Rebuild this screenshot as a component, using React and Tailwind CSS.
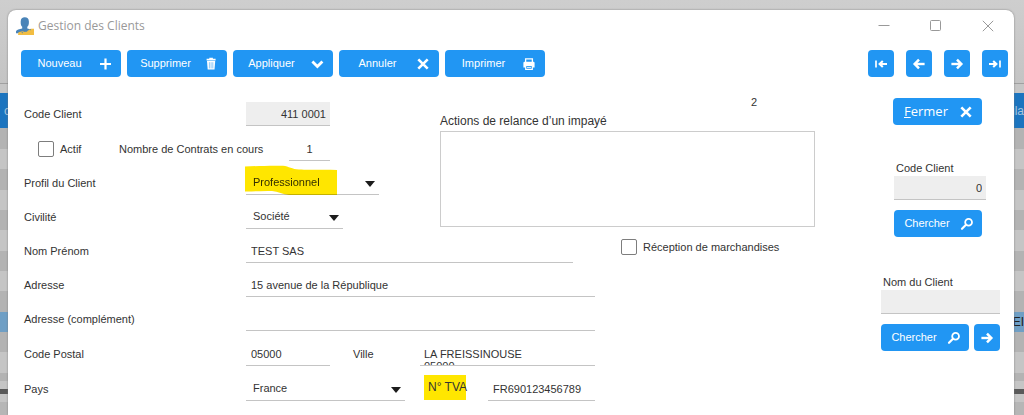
import React, { useId } from "react";

/* ---------- Icons ---------- */

function Icon({ children, className = "size-3.5" }) {
  return (
    <svg viewBox="0 0 14 14" className={className + " shrink-0"} fill="none" stroke="currentColor" strokeWidth="2.4" aria-hidden="true">
      {children}
    </svg>
  );
}

const PlusIcon = () => (
  <Icon>
    <path d="M7.500 1.500v11M2 7h11" strokeWidth="2.200" />
  </Icon>
);
const TrashIcon = () => (
  <Icon>
    <path d="M2.600 2.600h9M5.300 1.500h3.600" strokeWidth="1.600" />
    <path d="M3 4h8.200l-.7 8.600H3.700z" fill="currentColor" stroke="none" />
    <path d="M5.400 5.200v6.200M7.100 5.200v6.200M8.800 5.200v6.200" stroke="#2196f3" strokeWidth=".5" />
  </Icon>
);
const ChevronIcon = () => (
  <Icon>
    <path d="M2.400 4.400l5 5 5-5" strokeWidth="2.800" />
  </Icon>
);
const CrossIcon = () => (
  <Icon>
    <path d="M2.300 2.300l9.400 9.400M11.700 2.300l-9.400 9.400" strokeWidth="2.600" />
  </Icon>
);
const PrinterIcon = () => (
  <Icon>
    <path d="M3.600 5V1.800h6.800V5" strokeWidth="1.300" />
    <path d="M2.600 4.800h8.800a1.200 1.200 0 011.200 1.200v4.400H1.400V6a1.200 1.200 0 011.200-1.200z" fill="currentColor" stroke="none" />
    <path d="M3.700 8.400h6.600v4H3.700z" fill="#2196f3" strokeWidth="1.200" />
    <path d="M5 10.400h4" strokeWidth=".9" />
  </Icon>
);
const SearchIcon = () => (
  <Icon>
    <circle cx="8.600" cy="5.200" r="3.400" strokeWidth="1.800" />
    <path d="M6 7.800l-4 4" strokeWidth="2.200" strokeLinecap="round" />
  </Icon>
);
const RightIcon = () => (
  <Icon>
    <path d="M1.400 7h9.400" strokeWidth="2.400" />
    <path d="M7 2.700L11.300 7 7 11.300" strokeWidth="2.500" />
  </Icon>
);
const LeftIcon = () => (
  <Icon>
    <path d="M12.600 7H3.200" strokeWidth="2.400" />
    <path d="M7 2.700L2.700 7 7 11.300" strokeWidth="2.500" />
  </Icon>
);
const FirstIcon = () => (
  <Icon>
    <path d="M2 3.400v7.200" strokeWidth="1.700" />
    <path d="M13 7H6" strokeWidth="2" />
    <path d="M8.800 3.900L5.600 7l3.200 3.100" strokeWidth="2.100" />
  </Icon>
);
const LastIcon = () => (
  <Icon>
    <path d="M12 3.400v7.200" strokeWidth="1.700" />
    <path d="M1 7h7" strokeWidth="2" />
    <path d="M5.200 3.900L8.400 7l-3.200 3.100" strokeWidth="2.100" />
  </Icon>
);

function AppIcon() {
  return (
    <svg viewBox="0 0 18 18" className="size-[18px]" aria-hidden="true">
      <path d="M6.200 9.800C5 8.800 4.600 6.800 4.700 4.400 4.800 1.800 6.300.3 8.800.3s4 1.500 4.100 4.100c.1 2.400-.3 4.400-1.600 5.400v1.600l4.700 1.400v3.400H0v-2c.6-1.500 3.400-2.200 6.200-2.800z" fill="#4a84b8" />
      <path d="M2.500 15.300l4-1 2.500.6 3.200-1.400 2.400-1.700H18v6.200H2z" fill="#f2bd42" />
      <path d="M5.500 14.700l1.600.8-1 .9zM9.500 14.500l1.500-1 .3 1.300zM13.500 12.500l1.300-.6v1.500z" fill="#4a84b8" />
    </svg>
  );
}

/* ---------- Controls ---------- */

const blue =
  "flex h-[27px] shrink-0 items-center rounded bg-[#2196f3] text-white hover:bg-[#1e88e5]";

function ActionButton({ children, icon }) {
  return (
    <button type="button" className={blue + " w-[100px]"}>
      <span className="w-[77px] text-center">{children}</span>
      {icon}
    </button>
  );
}

function SideButton({ children, icon, className = "" }) {
  return (
    <button type="button" className={blue + " w-[88px] " + className}>
      <span className="w-[66px] text-center">{children}</span>
      {icon}
    </button>
  );
}

function IconButton({ label, icon }) {
  return (
    <button type="button" aria-label={label} className={blue + " w-[26px] justify-center"}>
      {icon}
    </button>
  );
}

const fieldLine = "h-6 min-w-0 rounded-none border-b border-[#c4c4c4] outline-none";

function Row({ tall, children }) {
  return <div className={"flex items-end " + (tall ? "h-[35px]" : "h-[34px]")}>{children}</div>;
}

function Label({ id, children }) {
  return (
    <label htmlFor={id} className="w-[223px] shrink-0 pl-px leading-6 whitespace-nowrap">
      {children}
    </label>
  );
}

function Select({ id, options, className, children }) {
  return (
    <div className={"relative isolate " + className}>
      <select id={id} className={fieldLine + " block w-full appearance-none bg-white px-[7px]"}>
        {options.map((o) => (
          <option key={o}>{o}</option>
        ))}
      </select>
      <svg viewBox="0 0 10 6" className="pointer-events-none absolute top-2.5 right-1 h-1.5 w-2.5" aria-hidden="true">
        <path d="M0 0h10L5 6z" fill="#1c1c1c" />
      </svg>
      {children}
    </div>
  );
}

function CheckBox({ children, className = "" }) {
  const id = useId();
  return (
    <div className={"flex items-center gap-1.5 " + className}>
      <input
        id={id}
        type="checkbox"
        className="size-4 shrink-0 appearance-none rounded-xs border border-[#7d7d7d] bg-white checked:bg-[#2196f3]"
      />
      <label htmlFor={id} className="whitespace-nowrap">
        {children}
      </label>
    </div>
  );
}

/* ---------- Dimmed window underneath ---------- */

function Backdrop() {
  return (
    <div aria-hidden="true" className="flex flex-col bg-[#cdcdcd] [grid-area:1/1]">
      <div className="h-[84px] shrink-0 border-b border-[#a0a0a0] bg-linear-to-b from-[#cecece] to-[#c4c4c4]" />
      <div className="h-[9px] shrink-0 bg-[#c6c6c6]" />
      <div className="flex h-[35px] shrink-0 items-center justify-between bg-[#1b74bf] pl-1 text-xs text-[#a9c4dc]">
        <span>c</span>
        <span>ula</span>
      </div>
      <div className="h-[21px] shrink-0 bg-[#b3b3b3]" />
      <div className="h-5 shrink-0 bg-[#c5c5c5]" />
      <div className="h-[21px] shrink-0 bg-[#b3b3b3]" />
      <div className="h-5 shrink-0 bg-[#c5c5c5]" />
      <div className="h-5 shrink-0 bg-[#b3b3b3]" />
      <div className="h-[21px] shrink-0 bg-[#c5c5c5]" />
      <div className="h-5 shrink-0 bg-[#b3b3b3]" />
      <div className="h-5 shrink-0 bg-[#c5c5c5]" />
      <div className="h-[21px] shrink-0 bg-[#b3b3b3]" />
      <div className="flex h-5 shrink-0 items-center justify-end bg-[#6f9fc5] text-[#222]">
        <span className="text-xs">EI</span>
      </div>
      <div className="h-5 shrink-0 bg-[#b3b3b3]" />
      <div className="h-[21px] shrink-0 bg-[#c5c5c5]" />
      <div className="h-2 shrink-0 bg-[#b3b3b3]" />
      <div className="h-2 shrink-0 bg-[#c5c5c5]" />
      <div className="h-[5px] shrink-0 bg-[#595959]" />
      <div className="h-2 shrink-0 bg-[#c5c5c5]" />
      <div className="flex-1 bg-[#b6b6b6]" />
    </div>
  );
}

/* ---------- Window ---------- */

function TitleBar() {
  return (
    <header className="flex h-10 items-center justify-between pr-5 pb-2 pl-2">
      <div className="flex items-center gap-1">
        <AppIcon />
        <h1 className="font-['Open_Sans','Noto_Sans',sans-serif] text-xs text-[#999]">Gestion des Clients</h1>
      </div>
      <div className="flex gap-10 text-[#999]">
        <button type="button" aria-label="Réduire">
          <svg viewBox="0 0 12 12" className="size-3" fill="none" stroke="currentColor">
            <path d="M.5 5.500h11" />
          </svg>
        </button>
        <button type="button" aria-label="Agrandir">
          <svg viewBox="0 0 12 12" className="size-3" fill="none" stroke="currentColor">
            <rect x=".5" y=".5" width="10" height="10" rx="1" />
          </svg>
        </button>
        <button type="button" aria-label="Fermer la fenêtre">
          <svg viewBox="0 0 12 12" className="size-3" fill="none" stroke="currentColor">
            <path d="M.8.8l10.400 10.400M11.200.8L.8 11.200" />
          </svg>
        </button>
      </div>
    </header>
  );
}

function Toolbar() {
  return (
    <div className="flex justify-between pr-1.5 pl-[13px]">
      <div className="flex gap-1.5">
        <ActionButton icon={<PlusIcon />}>Nouveau</ActionButton>
        <ActionButton icon={<TrashIcon />}>Supprimer</ActionButton>
        <ActionButton icon={<ChevronIcon />}>Appliquer</ActionButton>
        <ActionButton icon={<CrossIcon />}>Annuler</ActionButton>
        <ActionButton icon={<PrinterIcon />}>Imprimer</ActionButton>
      </div>
      <div className="flex gap-3">
        <IconButton label="Premier" icon={<FirstIcon />} />
        <IconButton label="Précédent" icon={<LeftIcon />} />
        <IconButton label="Suivant" icon={<RightIcon />} />
        <IconButton label="Dernier" icon={<LastIcon />} />
      </div>
    </div>
  );
}

function ClientForm() {
  return (
    <form className="flex-1 pt-[15px]">
      <div className="flex">
        <div className="w-[417px] shrink-0">
          <Row>
            <Label id="code">Code Client</Label>
            <input id="code" defaultValue="411 0001" className={fieldLine + " w-[84px] bg-[#eee] px-1 text-right"} />
          </Row>
          <Row tall>
            <CheckBox className="h-6 w-24 pl-[15px]">Actif</CheckBox>
            <label htmlFor="contrats" className="w-[170px] leading-6">
              Nombre de Contrats en cours
            </label>
            <input id="contrats" defaultValue="1" className={fieldLine + " w-[41px] text-center"} />
          </Row>
          <Row>
            <Label id="profil">Profil du Client</Label>
            <Select id="profil" options={["Professionnel", "Particulier"]} className="w-[133px]">
              <svg
                viewBox="0 0 92 30"
                className="pointer-events-none absolute -top-1.5 -left-px h-[30px] w-[92px] mix-blend-multiply"
                aria-hidden="true"
              >
                <path d="M0 1.500C12 1 28 .3 38 .8c6 .7 9 3.400 16 3.800 10 .5 26-.2 38 .4V30H44c-6-.4-11-3.600-17-4C18 25.500 8 26.800 0 26.500z" fill="#ffe600" />
              </svg>
            </Select>
          </Row>
          <Row>
            <Label id="civilite">Civilité</Label>
            <Select id="civilite" options={["Société", "Monsieur", "Madame"]} className="w-[97px]" />
          </Row>
        </div>
        <div className="flex flex-1 flex-col">
          <output className="self-end pr-[58px] leading-5">2</output>
          <label htmlFor="actions" className="text-xs leading-[19px]">
            Actions de relance d’un impayé
          </label>
          <textarea id="actions" className="block h-24 w-full resize-none border border-[#ccc] p-1 outline-none" />
        </div>
      </div>
      <Row>
        <Label id="nom">Nom Prénom</Label>
        <input id="nom" defaultValue="TEST SAS" className={fieldLine + " w-[327px] px-[5px]"} />
        <CheckBox className="h-8 pl-12">Réception de marchandises</CheckBox>
      </Row>
      <Row>
        <Label id="adresse">Adresse</Label>
        <input id="adresse" defaultValue="15 avenue de la République" className={fieldLine + " w-[349px] px-[5px]"} />
      </Row>
      <Row>
        <Label id="adresse2">Adresse (complément)</Label>
        <input id="adresse2" className={fieldLine + " w-[349px] px-[5px]"} />
      </Row>
      <Row tall>
        <Label id="cp">Code Postal</Label>
        <input id="cp" defaultValue="05000" className={fieldLine + " w-[84px] px-[5px]"} />
        <label htmlFor="ville" className="w-[90px] pl-[23px] leading-6">
          Ville
        </label>
        <textarea
          id="ville"
          defaultValue={"LA FREISSINOUSE\n05000"}
          className={fieldLine + " w-[175px] resize-none overflow-hidden px-1 pt-1.5 leading-3"}
        />
      </Row>
      <Row tall>
        <Label id="pays">Pays</Label>
        <Select id="pays" options={["France", "Belgique", "Suisse"]} className="w-[159px]" />
        <div className="w-[83px] pb-px pl-[19px]">
          <label htmlFor="tva" className="block w-[42px] bg-[#ffe600] pl-1 text-xs leading-[25px] whitespace-nowrap">
            N° TVA
          </label>
        </div>
        <input id="tva" defaultValue="FR690123456789" className={fieldLine + " w-[107px] px-[5px]"} />
      </Row>
    </form>
  );
}

function SearchPanel() {
  return (
    <aside className="flex w-[119px] shrink-0 flex-col pt-[21px]">
      <button type="button" className={blue + " ml-3 w-[89px]"}>
        <span className="w-[66px] text-center font-['Open_Sans','Noto_Sans',sans-serif] text-[13px]">
          <u>F</u>ermer
        </span>
        <CrossIcon />
      </button>
      <div className="mt-9 flex flex-col pl-[13px]">
        <label htmlFor="search-code" className="pl-0.5 leading-[15px]">
          Code Client
        </label>
        <input id="search-code" defaultValue="0" className={fieldLine + " w-[92px] bg-[#eee] px-1 text-right"} />
        <SideButton icon={<SearchIcon />} className="mt-2.5">
          Chercher
        </SideButton>
      </div>
      <div className="mt-[38px] flex flex-col">
        <label htmlFor="search-name" className="pl-0.5 leading-[15px]">
          Nom du Client
        </label>
        <input id="search-name" className={fieldLine + " w-full bg-[#eee] px-1"} />
        <div className="mt-2.5 flex justify-between">
          <SideButton icon={<SearchIcon />}>Chercher</SideButton>
          <IconButton label="Client suivant" icon={<RightIcon />} />
        </div>
      </div>
    </aside>
  );
}

export default function App() {
  return (
    <div className="grid min-h-screen font-['Liberation_Sans',Arial,sans-serif] text-[11px] text-[#333]">
      <Backdrop />
      <main className="z-10 mt-2.5 mr-2.5 ml-2 rounded-t-lg bg-white shadow-[0_0_2px_#777] [grid-area:1/1]">
        <TitleBar />
        <Toolbar />
        <div className="flex gap-[66px] pr-3.5 pl-[15px]">
          <ClientForm />
          <SearchPanel />
        </div>
      </main>
    </div>
  );
}
